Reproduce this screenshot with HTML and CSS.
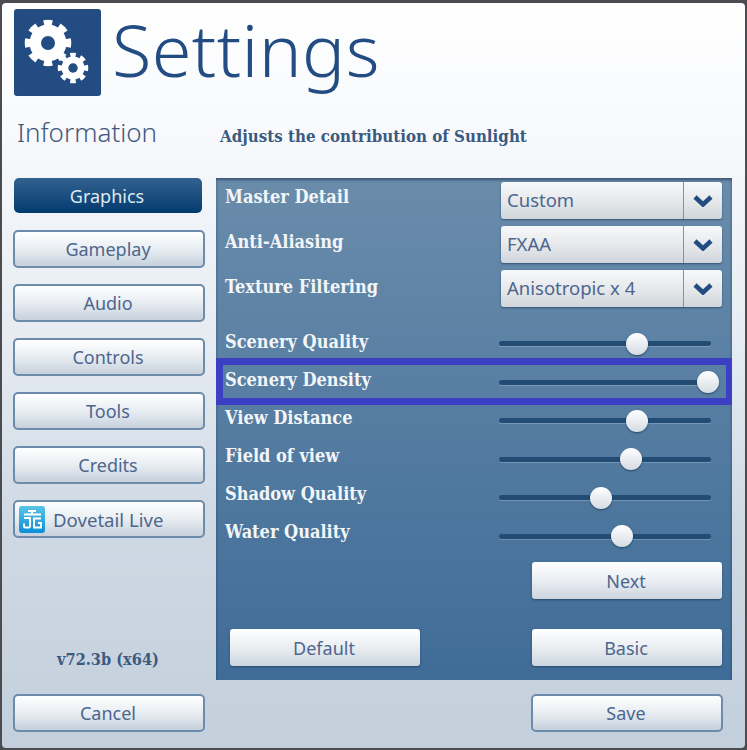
FILE: index.html
```html
<!DOCTYPE html>
<html lang="en">
  <head>
    <meta charset="UTF-8" />
    <title>Settings</title>
    <link rel="stylesheet" href="styles.css">
  </head>
  <body>
    <div class="window">
      <header class="header">
        <div class="logo">
          <svg width="87" height="87" viewBox="0 0 87 87">
            <!-- big gear -->
            <circle cx="34" cy="34" r="18.5" fill="#fff" />
            <circle cx="34" cy="34" r="20.5" fill="none" stroke="#fff" stroke-width="5.5" pathLength="80" stroke-dasharray="5.4 4.6" stroke-dashoffset="2.7" />
            <circle cx="34" cy="34" r="7" fill="#234c82" />
            <!-- small gear -->
            <circle cx="59" cy="59" r="14.5" fill="#234c82" />
            <circle cx="59" cy="59" r="11.5" fill="#fff" />
            <circle cx="59" cy="59" r="13" fill="none" stroke="#fff" stroke-width="4.5" pathLength="80" stroke-dasharray="5.4 4.6" stroke-dashoffset="2.7" />
            <circle cx="59" cy="59" r="4.7" fill="#234c82" />
          </svg>
        </div>
        <h1>Settings</h1>
      </header>

      <div class="info">
        <h2>Information</h2>
        <p>Adjusts the contribution of Sunlight</p>
      </div>

      <div class="main">
        <nav class="side">
          <button class="btn active">Graphics</button>
          <button class="btn">Gameplay</button>
          <button class="btn">Audio</button>
          <button class="btn">Controls</button>
          <button class="btn">Tools</button>
          <button class="btn">Credits</button>
          <button class="btn live">
            <svg width="26" height="27" viewBox="0 0 26 27">
              <defs>
                <linearGradient id="liveBg" x1="0" y1="0" x2="0" y2="1">
                  <stop offset="0" stop-color="#5cc4e6" />
                  <stop offset="1" stop-color="#0a8fd6" />
                </linearGradient>
              </defs>
              <rect width="26" height="27" rx="3" fill="url(#liveBg)" />
              <path d="M9 5h8M5 8.5h17M13 5v3.5M5 12h6v8a1.5 1.5 0 0 1-1.5 1.5h-3a1.5 1.5 0 0 1-1.5-1.5v-2.5M22 12.5h-7v9h7v-4.5h-3" fill="none" stroke="#fff" stroke-width="2" />
            </svg>
            <span>Dovetail Live</span>
          </button>
          <div class="version">v72.3b (x64)</div>
        </nav>

        <section class="panel">
          <div class="select-rows">
            <div class="select-row">
              <label>Master Detail</label>
              <div class="select">
                <span class="value">Custom</span>
                <span class="arrow"><svg width="20" height="12" viewBox="0 0 20 12"><path d="M2 2l8 7.5 8-7.5" /></svg></span>
              </div>
            </div>
            <div class="select-row">
              <label>Anti-Aliasing</label>
              <div class="select">
                <span class="value">FXAA</span>
                <span class="arrow"><svg width="20" height="12" viewBox="0 0 20 12"><path d="M2 2l8 7.5 8-7.5" /></svg></span>
              </div>
            </div>
            <div class="select-row">
              <label>Texture Filtering</label>
              <div class="select">
                <span class="value">Anisotropic x 4</span>
                <span class="arrow"><svg width="20" height="12" viewBox="0 0 20 12"><path d="M2 2l8 7.5 8-7.5" /></svg></span>
              </div>
            </div>
          </div>

          <div class="sliders">
            <div class="slider-labels">
              <label>Scenery Quality</label>
              <label>Scenery Density</label>
              <label>View Distance</label>
              <label>Field of view</label>
              <label>Shadow Quality</label>
              <label>Water Quality</label>
            </div>
            <div class="slider-tracks">
              <div class="track"><span class="thumb" style="left: 65%"></span></div>
              <div class="track"><span class="thumb" style="left: 98.5%"></span></div>
              <div class="track"><span class="thumb" style="left: 65%"></span></div>
              <div class="track"><span class="thumb" style="left: 62.2%"></span></div>
              <div class="track"><span class="thumb" style="left: 48%"></span></div>
              <div class="track"><span class="thumb" style="left: 58%"></span></div>
            </div>
            <div class="highlight"></div>
          </div>

          <div class="next-row">
            <button class="btn flat">Next</button>
          </div>
          <div class="bottom-row">
            <button class="btn flat">Default</button>
            <button class="btn flat">Basic</button>
          </div>
        </section>
      </div>

      <footer class="footer">
        <button class="btn">Cancel</button>
        <button class="btn">Save</button>
      </footer>
    </div>
  </body>
</html>
```

FILE: styles.css
```css
html,
body {
  margin: 0;
  padding: 0;
  width: 747px;
  height: 750px;
  overflow: hidden;
  background: #4a4c50;
}

.window {
  box-sizing: border-box;
  width: 743px;
  height: 745px;
  margin: 3px 0 0 2px;
  padding: 6px 0 0 11px;
  border-radius: 4px;
  background: linear-gradient(180deg, #ffffff 0%, #f6f8fb 20%, #e6ecf2 45%, #cfd9e4 70%, #c3cfdc 100%);
  font-family: "Noto Sans", sans-serif;
  color: #3f5a80;
}

.header {
  display: flex;
  align-items: flex-start;
  gap: 11px;
  height: 98px;
}

.logo {
  width: 87px;
  height: 87px;
  margin-left: 1px;
  border-radius: 3px;
  background: #234c82;
}

.logo svg {
  display: block;
}

h1 {
  margin: 0;
  font-size: 72px;
  font-weight: 300;
  line-height: 80px;
  letter-spacing: 0.4px;
  color: #234c82;
}

.info {
  display: flex;
  align-items: baseline;
  height: 71px;
  padding-top: 7px;
  box-sizing: border-box;
}

h2 {
  width: 203px;
  margin: 0 0 0 4px;
  font-size: 26px;
  font-weight: 300;
  line-height: 36px;
  color: #3f5a80;
}

.info p {
  margin: 0;
  font-family: "DejaVu Serif Condensed", "DejaVu Serif", serif;
  font-size: 16.8px;
  font-weight: 700;
  color: #3b5a82;
}

.main {
  display: flex;
  gap: 11px;
}

.side {
  display: flex;
  flex-direction: column;
  gap: 16px;
  width: 192px;
}

.btn {
  box-sizing: border-box;
  width: 192px;
  height: 38px;
  padding: 0 2px 0 0;
  border: 2px solid #6d8bab;
  border-radius: 5px;
  background: linear-gradient(180deg, #ffffff 0%, #e8edf2 50%, #c6d1dc 100%);
  font-family: "Noto Sans", sans-serif;
  font-size: 18px;
  color: #4d668e;
}

.btn.active {
  width: 188px;
  height: 35px;
  margin: 0 0 1px 1px;
  border: 0;
  background: linear-gradient(180deg, #33628f 0%, #023a6f 100%);
  color: #dfe8f0;
}

.btn.flat {
  width: 190px;
  height: 37px;
  border: 0;
  border-radius: 3px;
  background: linear-gradient(180deg, #ffffff 0%, #eaeef2 50%, #ccd5de 100%);
  box-shadow: 0 1px 2px rgba(20, 50, 80, 0.6);
}

.live {
  display: flex;
  align-items: center;
  gap: 8px;
  padding-left: 4px;
  font-size: 18.6px;
}

.version {
  margin-top: 96px;
  padding-right: 2px;
  text-align: center;
  font-family: "DejaVu Serif Condensed", "DejaVu Serif", serif;
  font-size: 16.2px;
  font-weight: 700;
  color: #3b5a82;
}

.panel {
  box-sizing: border-box;
  width: 516px;
  height: 502px;
  padding: 4px 10px 0 9px;
  background: linear-gradient(180deg, #6a8cab 0%, #3f6c97 100%);
  box-shadow: inset 0 2px 3px rgba(20, 40, 70, 0.55);
}

label {
  display: block;
  font-family: "DejaVu Serif Condensed", "DejaVu Serif", serif;
  font-size: 18px;
  font-weight: 700;
  color: #f3f6f8;
}

.select-rows {
  display: flex;
  flex-direction: column;
  gap: 7px;
}

.select-row {
  display: flex;
  justify-content: space-between;
  height: 37px;
}

.select-row label {
  line-height: 30px;
}

.select-row:nth-child(2) label {
  padding-top: 1px;
}

.select-row:nth-child(3) label {
  padding-top: 2px;
}

.select {
  display: flex;
  width: 221px;
  border-radius: 3px;
  background: linear-gradient(180deg, #f7f8f9 0%, #e3e6e9 60%, #cfd5db 100%);
  box-shadow: 0 1px 2px rgba(20, 50, 80, 0.6);
  font-size: 18.5px;
  color: #4d668e;
}

.value {
  flex: 1;
  padding-left: 6px;
  line-height: 35px;
}

.arrow {
  display: flex;
  align-items: center;
  justify-content: center;
  width: 38px;
  border-left: 1px solid #7b93ad;
}

.arrow path {
  fill: none;
  stroke: #234c82;
  stroke-width: 4.5;
}

.sliders {
  position: relative;
  display: flex;
  justify-content: space-between;
  margin-top: 22px;
  height: 221px;
}

.slider-labels {
  display: flex;
  flex-direction: column;
  gap: 14px;
  padding-top: 1px;
}

.slider-labels label {
  line-height: 24px;
}

.slider-tracks {
  width: 212px;
  margin: 12px 11px 0 0;
  display: flex;
  flex-direction: column;
  gap: 33.6px;
}

.track {
  position: relative;
  height: 5px;
  border-radius: 3px;
  background: #234c74;
  box-shadow: 0 1px 0 rgba(255, 255, 255, 0.2);
}

.thumb {
  position: absolute;
  top: -8.5px;
  width: 22px;
  height: 22px;
  margin-left: -11px;
  border-radius: 50%;
  background: linear-gradient(180deg, #ffffff 0%, #d5dce3 100%);
  box-shadow: 0 1px 2px rgba(20, 50, 80, 0.7);
}

.highlight {
  position: absolute;
  left: -9px;
  right: -10px;
  top: 29px;
  height: 47px;
  box-sizing: border-box;
  border: 7px solid #3a3fc4;
  border-right-width: 6px;
}

.next-row {
  display: flex;
  justify-content: flex-end;
  margin-top: 12px;
}

.bottom-row {
  display: flex;
  justify-content: space-between;
  margin: 30px 0 0 5px;
}

.footer {
  display: flex;
  justify-content: space-between;
  width: 710px;
  margin-top: 14px;
}
```
